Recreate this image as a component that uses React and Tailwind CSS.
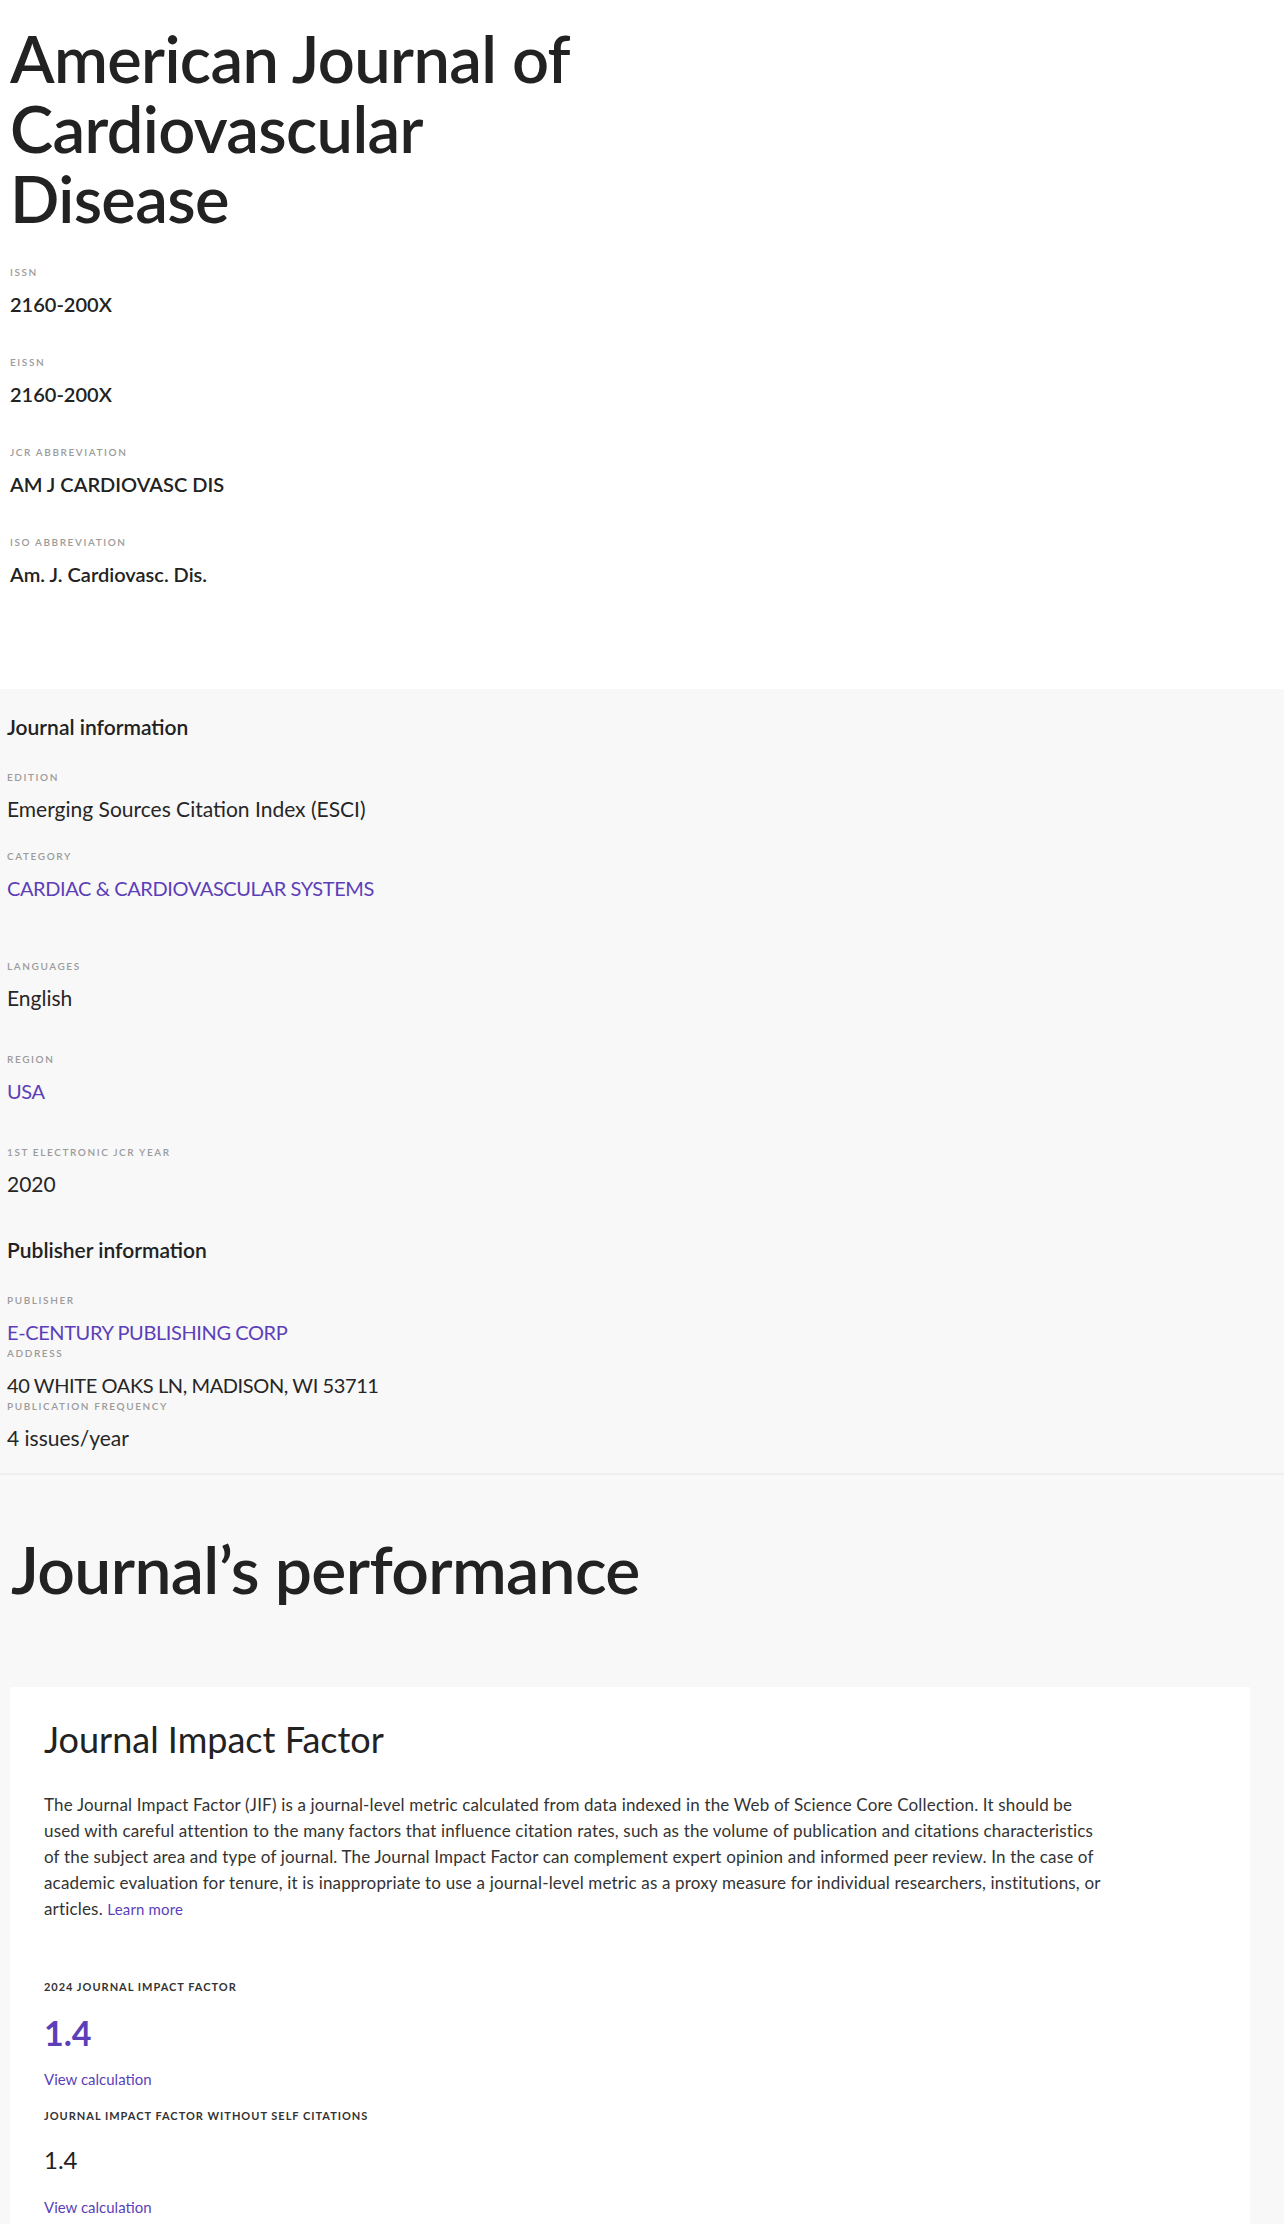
import React from 'react';

const Label = ({ children, className = '' }) => (
  <div className={`text-[10px] leading-[14px] font-semibold uppercase tracking-[0.16em] text-[#9b9b9b] ${className}`}>
    {children}
  </div>
);

const topFields = [
  { label: 'ISSN', value: '2160-200X' },
  { label: 'eISSN', value: '2160-200X' },
  { label: 'JCR Abbreviation', value: 'AM J CARDIOVASC DIS' },
  { label: 'ISO Abbreviation', value: 'Am. J. Cardiovasc. Dis.' },
];

// caps values run wide in Lato, so tighten them a little
const Value = ({ children, link, caps, className = '' }) => (
  <div
    className={`mt-[11px] leading-[28px] ${caps ? 'text-[20px] tracking-[-0.02em]' : 'text-[21px]'} ${
      link ? 'text-[#5c3fb8]' : 'text-[#262626]'
    } ${className}`}
  >
    {children}
  </div>
);

export default function App() {
  return (
    <div className="min-h-screen bg-white font-['Lato',sans-serif] text-[#222]">
      {/* header block */}
      <section className="px-[10px] pt-[23px] pb-[101px]">
        <h1 className="w-[600px] text-[65px] leading-[70px] font-semibold tracking-[-0.01em] text-[#222]">
          American Journal of Cardiovascular Disease
        </h1>
        <div className="mt-[32px] flex flex-col gap-[37px]">
          {topFields.map((f) => (
            <div key={f.label}>
              <Label>{f.label}</Label>
              <div className="mt-[11px] text-[20px] leading-[28px] font-semibold text-[#222]">{f.value}</div>
            </div>
          ))}
        </div>
      </section>

      {/* journal + publisher info */}
      <section className="bg-[#f8f8f8] px-[7px] pt-[24px] pb-[21px] border-b-2 border-[#efefef]">
        <h2 className="text-[21px] leading-[28px] font-semibold text-[#222]">Journal information</h2>

        <div className="mt-[29px]">
          <Label>Edition</Label>
          <Value>Emerging Sources Citation Index (ESCI)</Value>
        </div>
        <div className="mt-[26px]">
          <Label>Category</Label>
          <Value link caps>CARDIAC &amp; CARDIOVASCULAR SYSTEMS</Value>
        </div>
        <div className="mt-[57px]">
          <Label>Languages</Label>
          <Value className="mt-[10px]">English</Value>
        </div>
        <div className="mt-[40px]">
          <Label>Region</Label>
          <Value link caps className="mt-[10px]">USA</Value>
        </div>
        <div className="mt-[40px]">
          <Label>1st Electronic JCR Year</Label>
          <Value>2020</Value>
        </div>

        <h2 className="mt-[38px] text-[21px] leading-[28px] font-semibold text-[#222]">Publisher information</h2>
        <div className="mt-[29px]">
          <Label>Publisher</Label>
          <Value link caps className="mt-[10px]">E-CENTURY PUBLISHING CORP</Value>
        </div>
        <div>
          <Label>Address</Label>
          <Value caps>40 WHITE OAKS LN, MADISON, WI 53711</Value>
        </div>
        <div>
          <Label>Publication frequency</Label>
          <Value>4 issues/year</Value>
        </div>
      </section>

      {/* performance */}
      <section className="bg-[#f8f8f8] pt-[59px] pb-[80px]">
        <h2 className="px-[11px] text-[66px] leading-[70px] font-semibold tracking-[-0.01em] text-[#222]">
          Journal’s performance
        </h2>

        <div className="mt-[83px] ml-[10px] w-[1240px] bg-white pl-[34px] pr-[60px] pt-[30px] pb-[60px]">
          <h3 className="text-[36px] leading-[44px] font-normal text-[#222]">Journal Impact Factor</h3>
          <p className="mt-[31px] text-[17px] leading-[26px] tracking-[0.01em] text-[#333]">
            The Journal Impact Factor (JIF) is a journal-level metric calculated from data indexed in the Web of Science
            Core Collection. It should be
            <br />
            used with careful attention to the many factors that influence citation rates, such as the volume of
            publication and citations characteristics
            <br />
            of the subject area and type of journal. The Journal Impact Factor can complement expert opinion and informed
            peer review. In the case of
            <br />
            academic evaluation for tenure, it is inappropriate to use a journal-level metric as a proxy measure for
            individual researchers, institutions, or
            <br />
            articles. <a href="#" className="text-[15px] text-[#5c3fb8]">Learn more</a>
          </p>

          <div className="mt-[57px] text-[11px] leading-[16px] font-bold uppercase tracking-[0.09em] text-[#333]">
            2024 Journal Impact Factor
          </div>
          <div className="mt-[18px] text-[34px] leading-[40px] font-bold text-[#5c3fb8]">1.4</div>
          <a href="#" className="mt-[16px] block w-fit text-[15px] leading-[20px] text-[#5c3fb8]">View calculation</a>

          <div className="mt-[19px] text-[11px] leading-[16px] font-bold uppercase tracking-[0.09em] text-[#333]">
            Journal Impact Factor without self citations
          </div>
          <div className="mt-[20px] text-[24px] leading-[32px] text-[#222]">1.4</div>
          <a href="#" className="mt-[21px] block w-fit text-[15px] leading-[20px] text-[#5c3fb8]">View calculation</a>
        </div>
      </section>
    </div>
  );
}
